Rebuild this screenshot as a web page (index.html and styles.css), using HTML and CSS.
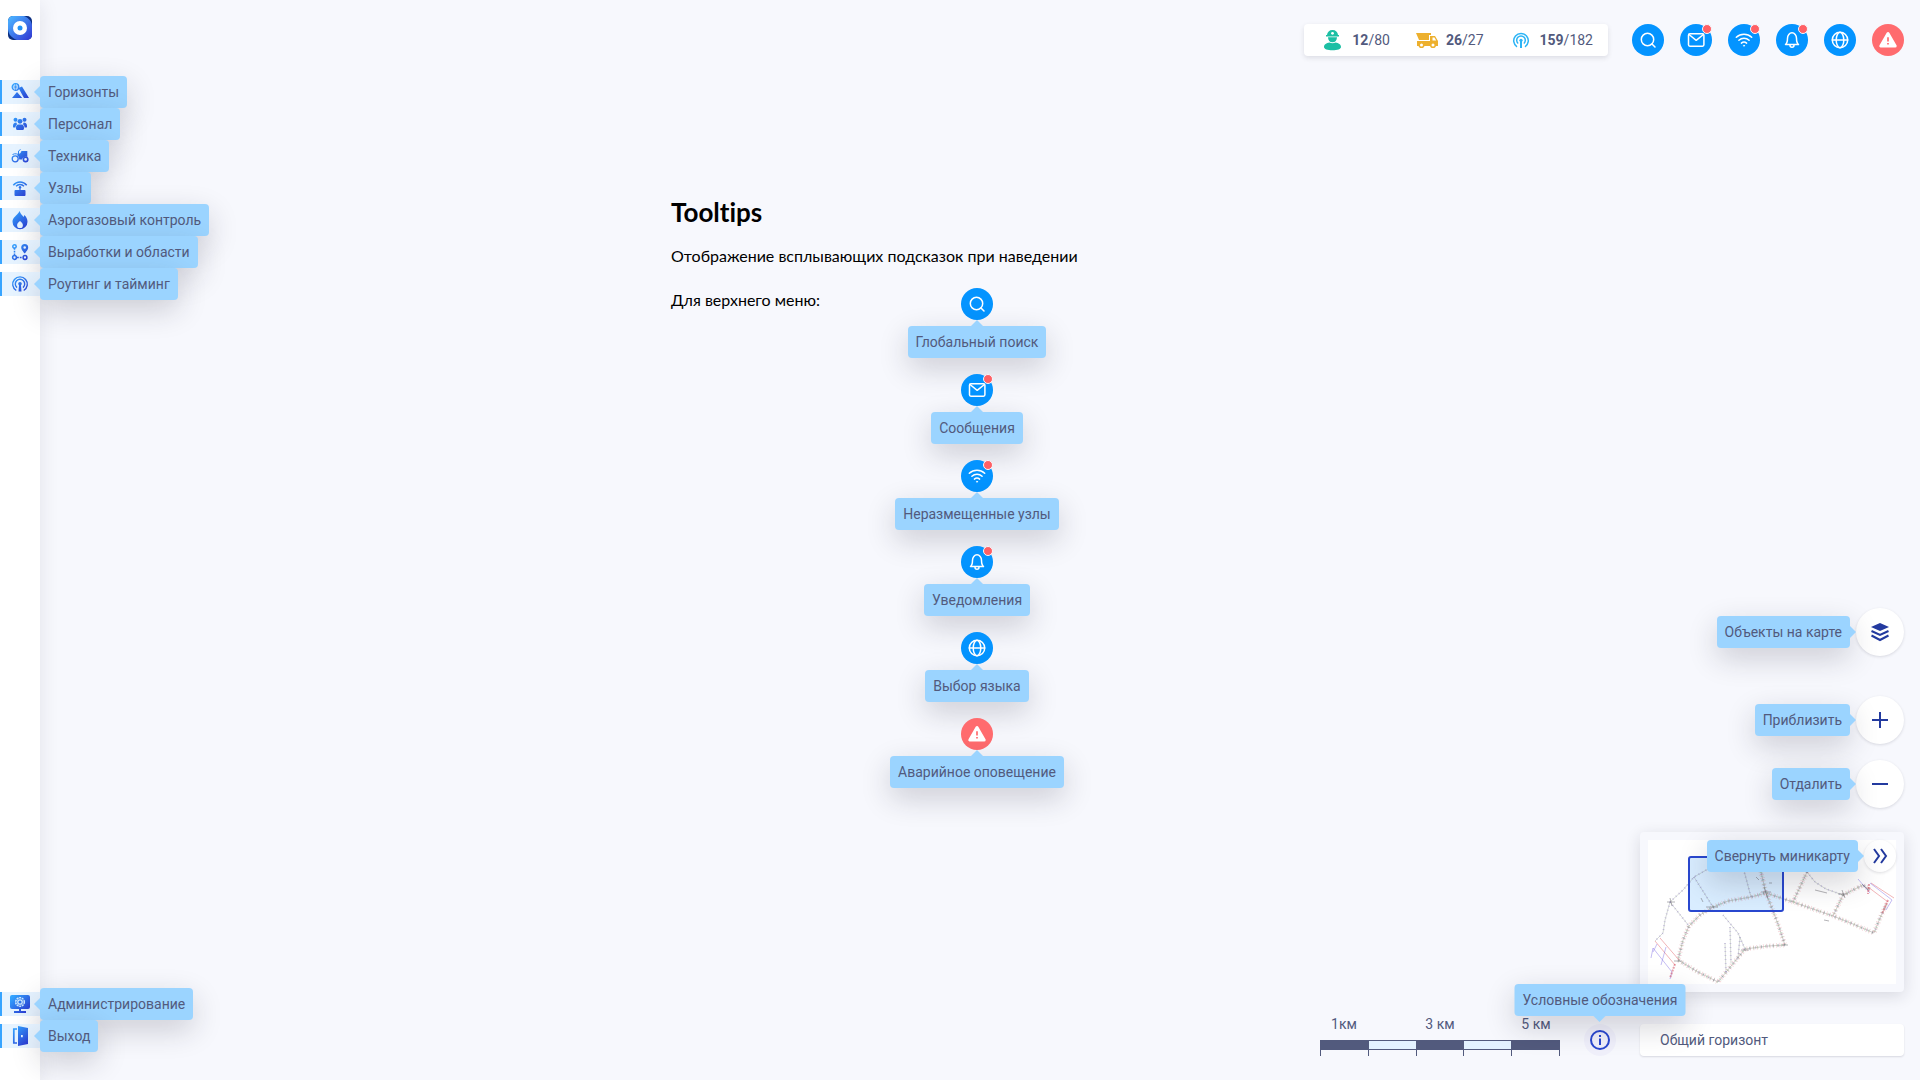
FILE: index.html
```html
<!DOCTYPE html>
<html lang="ru">
<head>
<meta charset="utf-8">
<meta name="viewport" content="width=device-width, initial-scale=1">
<title>Tooltips</title>
<link rel="stylesheet" href="styles.css">
</head>
<body>
<svg class="sprite" width="0" height="0" aria-hidden="true">
  <defs>
    <linearGradient id="blue" gradientUnits="userSpaceOnUse" x1="3" y1="2" x2="17" y2="18">
      <stop offset="0" stop-color="#32a4ff"/><stop offset="1" stop-color="#2c3dd3"/>
    </linearGradient>
    <linearGradient id="logo" gradientUnits="userSpaceOnUse" x1="2" y1="2" x2="22" y2="22">
      <stop offset="0" stop-color="#4ab0ff"/><stop offset="1" stop-color="#3340d6"/>
    </linearGradient>
    <symbol id="search" viewBox="0 0 32 32"><circle cx="15.5" cy="15.5" r="6.2"/><path d="M20 20l3 3"/></symbol>
    <symbol id="mail" viewBox="0 0 32 32"><rect x="8.5" y="9.8" width="15.4" height="12.4" rx="1.4"/><path d="M9 10.500l7.200 5.800 7.200-5.800"/></symbol>
    <symbol id="wifi" viewBox="0 0 32 32"><path d="M8.300 13.300a11.500 11.500 0 0 1 15.400 0M10.900 16.300a7.600 7.600 0 0 1 10.200 0M13.400 19.100a4 4 0 0 1 5.200 0"/><circle cx="16" cy="21.700" r=".6" fill="#fff" stroke-width=".6"/></symbol>
    <symbol id="bell" viewBox="0 0 32 32"><path d="M9.500 20.500c1.700-1.300 2-2.700 2-6.200a4.500 5.500 0 0 1 9 0c0 3.500.3 4.900 2 6.200zM14 21.200a2 2 0 0 0 4 0"/></symbol>
    <symbol id="globe" viewBox="0 0 32 32"><circle cx="16" cy="16" r="7.700"/><ellipse cx="16" cy="16" rx="3.800" ry="7.700"/><path d="M8.300 16h15.400"/></symbol>
    <symbol id="alert" viewBox="0 0 32 32"><path d="M16 9.500L8.800 22h14.400z" fill="#fff" stroke-width="3"/><path d="M16 13.200v4.300M16 19v1.600" stroke="#ff6b6e" stroke-width="1.700" stroke-linecap="butt"/></symbol>
  </defs>
</svg>

<aside class="sidebar">
  <a class="logo" href="#" aria-label="Главная">
    <svg width="24" height="24" viewBox="0 0 24 24"><rect width="24" height="24" rx="5" fill="#0c2f80"/><path d="M5 0h11c5 2 8 6 8 10v9a5 5 0 0 1-5 5H9C4 22 0 18 0 13V5a5 5 0 0 1 5-5z" fill="url(#logo)"/><circle cx="12" cy="12" r="7" fill="#fff"/><circle cx="12" cy="12" r="2.500" fill="#2291f5"/></svg>
  </a>
  <nav class="menu">
    <a class="menu-item" href="#"><svg viewBox="0 0 20 20"><circle cx="5.500" cy="5" r="3.300" fill="none" stroke="url(#blue)" stroke-width="1.300"/><path d="M2.500 5h6M5.500 2v6M3.500 3l4 4M7.500 3l-4 4" stroke="url(#blue)" stroke-width=".7"/><path d="M8.500 6l3.500-1.500 7 11.500h-5zM2 16l5-6 5.200 6z" fill="url(#blue)"/></svg><span class="tip tip-right">Горизонты</span></a>
    <a class="menu-item" href="#"><svg viewBox="0 0 20 20" fill="url(#blue)"><circle cx="5.500" cy="5.800" r="2"/><circle cx="14.500" cy="5.800" r="2"/><circle cx="10" cy="7.300" r="2.400"/><path d="M6.300 8.500a4 4 0 0 0 1 1.800c-1.300.6-1.800 1.700-1.800 3.200H4c-1 0-1-.5-1-1.500 0-2 1-3.500 3.300-3.500zM13.700 8.500c2.300 0 3.300 1.500 3.300 3.500 0 1 0 1.500-1 1.500h-1.500c0-1.500-.5-2.600-1.800-3.200a4 4 0 0 0 1-1.800zM8.500 10.600h3c1.800 0 2.500 1.400 2.500 3.400 0 1.600-.4 2-1.800 2H7.800C6.400 16 6 15.600 6 14c0-2 .7-3.400 2.500-3.400z"/></svg><span class="tip tip-right">Персонал</span></a>
    <a class="menu-item" href="#"><svg viewBox="0 0 20 20"><circle cx="5.200" cy="12.800" r="3" fill="none" stroke="url(#blue)" stroke-width="1.300"/><circle cx="15.600" cy="13.400" r="2.200" fill="none" stroke="url(#blue)" stroke-width="1.600"/><path d="M10.500 7l1-2h5.800v6a4 4 0 0 0-5.300 2.500H9.200A4.500 4.500 0 0 0 7 9z" fill="url(#blue)"/><path d="M2.500 8.500c3-1.500 5-.5 7 .5M8.500 8V5l2-1.500" fill="none" stroke="url(#blue)"/></svg><span class="tip tip-right">Техника</span></a>
    <a class="menu-item" href="#"><svg viewBox="0 0 20 20"><path d="M3.300 7.200a8.500 8.500 0 0 1 13.400 0M6 8.300a5.500 5.500 0 0 1 8 0" fill="none" stroke="url(#blue)" stroke-width="1.400"/><circle cx="10" cy="9.200" r="1.200" fill="url(#blue)"/><path d="M9.400 9h1.200v3h4.100c.6 0 .8.300.8.900v4.200c0 .6-.3.900-.8.900H5.300c-.5 0-.8-.3-.8-.9v-4.200c0-.6.300-.9.800-.9h4.100z" fill="url(#blue)"/></svg><span class="tip tip-right">Узлы</span></a>
    <a class="menu-item" href="#"><svg viewBox="0 0 20 20"><path fill-rule="evenodd" d="M9.800 1c.2 2.800 2.400 3.800 3.700 6 .5-.6.700-1.200.7-2 2 1.700 3.300 3.900 3.300 6.800a7.500 7.500 0 0 1-15 0C2.500 7.500 6.500 6 9.800 1zM10 11c-1.700 1.500-2.900 2.600-2.900 4.200a2.900 2.900 0 0 0 5.800 0c0-1.600-1.200-2.700-2.900-4.200z" fill="url(#blue)"/></svg><span class="tip tip-right">Аэрогазовый контроль</span></a>
    <a class="menu-item" href="#"><svg viewBox="0 0 20 20"><path fill-rule="evenodd" d="M14.700 2a3.500 3.500 0 0 1 3.500 3.500c0 2.300-3.500 6-3.500 6s-3.500-3.700-3.500-6A3.500 3.500 0 0 1 14.700 2zm0 2.200a1.300 1.300 0 1 0 0 2.600 1.300 1.300 0 0 0 0-2.600z" fill="url(#blue)"/><g fill="none" stroke="url(#blue)" stroke-width="1.500"><circle cx="4.500" cy="4.400" r="1.700"/><circle cx="4.500" cy="15.500" r="1.900"/><circle cx="15" cy="15.500" r="1.900"/><path d="M4.500 6v7.500M7 15.500h5.500" stroke-dasharray="1.800 1"/></g></svg><span class="tip tip-right">Выработки и области</span></a>
    <a class="menu-item" href="#"><svg viewBox="0 0 20 20"><g fill="none" stroke="url(#blue)" stroke-width="1.400"><path d="M6.300 16.500a7.300 7.300 0 1 1 7.400 0"/><path d="M7 13.600a4.700 4.700 0 1 1 6 0"/></g><circle cx="10" cy="9.800" r="1.800" fill="url(#blue)"/><path d="M9 11h2l.5 6.500h-3z" fill="url(#blue)"/></svg><span class="tip tip-right">Роутинг и тайминг</span></a>
  </nav>
  <nav class="menu menu-bottom">
    <a class="menu-item" href="#"><svg viewBox="0 0 20 20"><path d="M2 1h16a2 2 0 0 1 2 2v10a2 2 0 0 1-2 2h-7v2h5v2H4v-2h5v-2H2a2 2 0 0 1-2-2V3a2 2 0 0 1 2-2z" fill="url(#blue)"/><circle cx="10" cy="8" r="4.300" fill="none" stroke="#cfe9ff" stroke-width="1.500" stroke-dasharray="2 .7"/><circle cx="10" cy="8" r="2.200" fill="none" stroke="#cfe9ff" stroke-width="1.300"/></svg><span class="tip tip-right">Администрирование</span></a>
    <a class="menu-item" href="#"><svg viewBox="0 0 20 20"><path fill-rule="evenodd" d="M8 0l10 2v16L8 20zM11 9v2.200h1.800V9z" fill="url(#blue)"/><path d="M7 3H3.800v14H7" fill="none" stroke="url(#blue)" stroke-width="1.700"/></svg><span class="tip tip-right">Выход</span></a>
  </nav>
</aside>

<main class="main">
  <header class="topbar">
    <div class="stats">
      <div class="stat"><svg viewBox="0 0 24 24" fill="#1cbfa4"><path d="M7 7c.3-3 2.300-5 5.500-5S17.800 4 18 7h1v1.500H6V7zM8 9.300h9c0 3-1.800 5-4.500 5S8 12.300 8 9.300zM9.500 14.500c1.700 1 4.300 1 6 0 3 .3 5.500 2 5.500 4.500 0 2-3.500 3.300-8.500 3.300S4 21 4 19c0-2.500 2.500-4.200 5.500-4.500z"/><circle cx="12.500" cy="5.300" r="1.400" fill="#fff"/></svg><span><b>12</b>/80</span></div>
      <div class="stat"><svg viewBox="0 0 24 24"><path d="M2 5h15v2h-2v5H5zM16 8h5l3 5v5H3v-5h13z" fill="#edb02e"/><path d="M18.500 9.500h2l1.700 3h-3.700z" fill="#fff"/><g fill="#fff" stroke="#edb02e" stroke-width="1.600"><circle cx="7.500" cy="17" r="2.300"/><circle cx="19" cy="17" r="2.300"/></g></svg><span><b>26</b>/27</span></div>
      <div class="stat"><svg viewBox="0 0 24 24"><g fill="none" stroke="#2cb4f5" stroke-width="1.500"><path d="M9 18.800a7.300 7.300 0 1 1 8 0"/><path d="M10.200 15.500a4.300 4.300 0 1 1 5.600 0"/></g><circle cx="13" cy="12.300" r="1.600" fill="#2cb4f5"/><path d="M12 13h2v7h-2z" fill="#2cb4f5"/></svg><span><b>159</b>/182</span></div>
    </div>
    <button class="round" aria-label="Глобальный поиск"><svg><use href="#search"/></svg></button>
    <button class="round has-dot" aria-label="Сообщения"><svg><use href="#mail"/></svg></button>
    <button class="round has-dot" aria-label="Неразмещенные узлы"><svg><use href="#wifi"/></svg></button>
    <button class="round has-dot" aria-label="Уведомления"><svg><use href="#bell"/></svg></button>
    <button class="round" aria-label="Выбор языка"><svg><use href="#globe"/></svg></button>
    <button class="round danger" aria-label="Аварийное оповещение"><svg><use href="#alert"/></svg></button>
  </header>

  <section class="intro">
    <h1>Tooltips</h1>
    <p>Отображение всплывающих подсказок при наведении</p>
    <div class="demo">
      <p>Для верхнего меню:</p>
      <ul class="demo-list">
        <li><button class="round" aria-labelledby="t1"><svg><use href="#search"/></svg></button><span class="tip tip-below" id="t1">Глобальный поиск</span></li>
        <li><button class="round has-dot" aria-labelledby="t2"><svg><use href="#mail"/></svg></button><span class="tip tip-below" id="t2">Сообщения</span></li>
        <li><button class="round has-dot" aria-labelledby="t3"><svg><use href="#wifi"/></svg></button><span class="tip tip-below" id="t3">Неразмещенные узлы</span></li>
        <li><button class="round has-dot" aria-labelledby="t4"><svg><use href="#bell"/></svg></button><span class="tip tip-below" id="t4">Уведомления</span></li>
        <li><button class="round" aria-labelledby="t5"><svg><use href="#globe"/></svg></button><span class="tip tip-below" id="t5">Выбор языка</span></li>
        <li><button class="round danger" aria-labelledby="t6"><svg><use href="#alert"/></svg></button><span class="tip tip-below" id="t6">Аварийное оповещение</span></li>
      </ul>
    </div>
  </section>

  <section class="map-tools">
    <div class="tool tool-layers"><span class="tip tip-left" id="m1">Объекты на карте</span><button class="map-button" aria-labelledby="m1"><svg viewBox="0 0 24 24"><path d="M12 3l9 4-9 4-9-4z" fill="#233a9f" stroke="none"/><path d="M3.500 11l8.500 4 8.500-4M3.500 15.500l8.500 4.500 8.500-4.500"/></svg></button></div>
    <div class="tool"><span class="tip tip-left" id="m2">Приблизить</span><button class="map-button" aria-labelledby="m2"><svg viewBox="0 0 24 24"><path d="M12 4v16M4 12h16"/></svg></button></div>
    <div class="tool"><span class="tip tip-left" id="m3">Отдалить</span><button class="map-button" aria-labelledby="m3"><svg viewBox="0 0 24 24"><path d="M4 12h16"/></svg></button></div>

    <div class="minimap">
      <svg class="minimap-plan" viewBox="0 0 248 144" aria-hidden="true">
        <defs>
          <g id="roads">
            <path d="M65 67L80 61 103 57 118 53 145 62 165 69 185 76 205 84 226 93 232 78 239 63"/>
            <path d="M112 28L118 53 130 84 137 105 120 106 97 109 88 120 70 142 50 132 30 120 35 100 41 86 52 75 65 67"/>
            <path d="M159 32L145 62M195 55L185 76M195 55L215 45 222 50"/>
          </g>
          <g id="paths">
            <path d="M22 62L35 50 46 37 60 29 95 27 103 57M46 37L65 67M159 32L167 42 178 49 195 55"/>
            <path d="M75 75L90 93 97 109M82 87L83 123M77 103L78 132M92 97L90 118M22 62L41 86M22 62L17 80 15 93 7 101"/>
          </g>
        </defs>
        <rect class="viewport-fill" x="41" y="17" width="94" height="54" rx="2"/>
        <g fill="none">
          <use href="#roads" stroke="#8d8a86" stroke-opacity=".4" stroke-width="1"/>
          <use href="#roads" stroke="#e58e98" stroke-opacity=".4" stroke-width="5" stroke-dasharray=".7 2.600"/>
          <use href="#roads" stroke="#76a878" stroke-opacity=".35" stroke-width="3" stroke-dasharray="1 3"/>
          <use href="#roads" stroke="#6a5f93" stroke-opacity=".35" stroke-width="3" stroke-dasharray=".8 5"/>
          <use href="#paths" stroke="#8c9a8c" stroke-opacity=".5" stroke-width=".7"/>
          <use href="#paths" stroke="#7c65c0" stroke-opacity=".35" stroke-width="2" stroke-dasharray=".8 3.200"/>
          <path d="M7 101L27 125M12 98L31 120M220 47L240 62M223 43L246 58" stroke="#e46a70" stroke-opacity=".5"/>
          <path d="M5 108L24 132 22 139M5 108L3 118M18 107L13 125M210 39L222 53M222 43L244 60 238 70M9 104L5 112" stroke="#6f5be0" stroke-opacity=".4"/>
          <path d="M27 124L22 138M240 60L234 74M221 44L220 54" stroke="#d4465a" stroke-opacity=".5" stroke-width="2" stroke-dasharray="2 1"/>
          <path d="M58 67h12M113 52h10M116 47l4 12M190 54h10M194 50l3 8M19 62h8M22 58l2 8M26 121h8M134 105h6M93 110h8M214 44l6 6M167 50l12 3M176 80l5 1M108 37l3 3M53 58l2 4M121 43h3" stroke="#69686e" stroke-opacity=".5" stroke-width="1"/>
        </g>
        <rect x="41" y="17" width="94" height="54" rx="2" fill="none" stroke="#2947cf" stroke-width="2"/>
      </svg>
      <div class="collapse"><span class="tip tip-left" id="m4">Свернуть миникарту</span><button class="map-button map-button-small" aria-labelledby="m4"><svg viewBox="0 0 24 24"><path d="M6 5l5 7-5 7M13 5l5 7-5 7"/></svg></button></div>
    </div>

    <div class="footer">
      <div class="scale">
        <div class="scale-labels"><span>1км</span><span></span><span>3 км</span><span></span><span>5 км</span></div>
        <div class="scale-bar"><i></i><i></i><i></i><i></i><i></i></div>
      </div>
      <button class="info" aria-labelledby="m5"><svg viewBox="0 0 20 20"><circle cx="10" cy="10" r="9"/><path d="M10 8.500V15M10 5v2"/></svg><span class="tip tip-above" id="m5">Условные обозначения</span></button>
      <select class="horizon" aria-label="Горизонт"><option>Общий горизонт</option></select>
    </div>
  </section>
</main>
</body>
</html>
```
FILE: styles.css
```css
* {
  box-sizing: border-box;
}

body {
  margin: 0;
  display: flex;
  min-height: 100vh;
  background: #f7f8fd;
  color: #525a7d;
  font: 14px/20px Roboto, sans-serif;
}

button,
select {
  border: 0;
  padding: 0;
  font: inherit;
  color: inherit;
  cursor: pointer;
}

.sprite {
  position: absolute;
}

/* Tooltips */
.tip {
  --tip: #9bd4ff;
  position: relative;
  height: 32px;
  padding: 6px 8px;
  border-radius: 4px;
  background: var(--tip);
  box-shadow: 0 10px 30px rgba(30, 30, 50, .2);
  white-space: nowrap;
}

.tip::before {
  content: "";
  position: absolute;
  border: 6px solid transparent;
}

.tip-right::before {
  right: 100%;
  top: 10px;
  border-left: 0;
  border-right-color: var(--tip);
}

.tip-left::before {
  left: 100%;
  top: 10px;
  border-right: 0;
  border-left-color: var(--tip);
}

.tip-below::before {
  bottom: 100%;
  left: calc(50% - 6px);
  border-top: 0;
  border-bottom-color: var(--tip);
}

.tip-above::before {
  top: 100%;
  left: calc(50% - 6px);
  border-bottom: 0;
  border-top-color: var(--tip);
}

/* Sidebar */
.sidebar {
  position: relative;
  z-index: 1;
  display: flex;
  flex-direction: column;
  flex: none;
  width: 40px;
  padding: 16px 0 32px;
  background: #fff;
  box-shadow: 0 4px 20px rgba(30, 30, 50, .1);
}

.logo {
  height: 24px;
  margin: 0 8px 40px;
}

.logo svg {
  display: block;
}

.menu {
  display: flex;
  flex-direction: column;
  gap: 8px;
}

.menu-bottom {
  margin-top: auto;
}

.menu-item {
  position: relative;
  display: flex;
  align-items: center;
  height: 24px;
  padding-left: 8px;
  border-left: 2px solid #37a4ff;
  background: #e6f3ff;
  color: inherit;
  text-decoration: none;
}

.menu-item svg {
  width: 20px;
  height: 20px;
}

.menu-item .tip {
  position: absolute;
  left: 38px;
  top: -4px;
}

/* Main area */
.main {
  flex: 1;
  display: grid;
  grid-template-columns: 1fr 612px 1fr;
  grid-template-rows: auto 1fr;
  padding: 24px 16px 24px 10px;
}

.topbar {
  grid-column: 1 / -1;
  display: flex;
  justify-content: flex-end;
  gap: 16px;
}

.stats {
  display: flex;
  align-items: center;
  gap: 24px;
  height: 32px;
  margin-right: 8px;
  padding: 0 15px 0 16px;
  border-radius: 4px;
  background: #fff;
  box-shadow: 0 2px 5px rgba(30, 30, 50, .12);
}

.stat {
  display: flex;
  align-items: center;
  gap: 8px;
}

.stat svg {
  width: 24px;
  height: 24px;
}

.round {
  position: relative;
  width: 32px;
  height: 32px;
  border-radius: 50%;
  background: #0494ff;
}

.round.danger {
  background: #ff6b6e;
}

.round svg {
  display: block;
  width: 32px;
  height: 32px;
  fill: none;
  stroke: #fff;
  stroke-width: 1.5;
  stroke-linecap: round;
  stroke-linejoin: round;
}

.has-dot::after {
  content: "";
  position: absolute;
  top: 0;
  right: 0;
  width: 8px;
  height: 8px;
  border: 1px solid #f7f8fd;
  border-radius: 50%;
  background: #ff6065;
}

/* Description with the examples */
.intro {
  grid-column: 2;
  padding-top: 140px;
  color: #000;
  font: 16px/24px Lato, sans-serif;
  font-variant-ligatures: none;
}

.intro h1 {
  margin: 0 0 16px;
  font-size: 26px;
  line-height: 32px;
}

.intro p {
  margin: 0;
}

.demo {
  display: grid;
  grid-template-columns: 1fr auto 1fr;
  margin-top: 20px;
}

.demo-list {
  display: flex;
  flex-direction: column;
  gap: 16px;
  margin: 0;
  padding: 0;
  list-style: none;
  color: #525a7d;
  font: 14px/20px Roboto, sans-serif;
}

.demo-list li {
  display: flex;
  flex-direction: column;
  align-items: center;
  gap: 6px;
}

/* Map controls */
.map-tools {
  grid-column: 3;
  align-self: end;
  display: flex;
  flex-direction: column;
  align-items: flex-end;
}

.tool {
  display: flex;
  align-items: center;
  gap: 6px;
  margin-bottom: 16px;
}

.tool-layers {
  margin-bottom: 40px;
}

.map-button {
  display: grid;
  place-items: center;
  width: 48px;
  height: 48px;
  border-radius: 50%;
  background: #fff;
  box-shadow: 0 1px 3px rgba(30, 30, 50, .14);
}

.map-button svg {
  width: 24px;
  height: 24px;
  fill: none;
  stroke: #233a9f;
  stroke-width: 2;
}

.map-button-small {
  width: 32px;
  height: 32px;
}

.minimap {
  position: relative;
  width: 264px;
  margin: 8px 0 22px;
  padding: 8px;
  border-radius: 4px;
  background: #f7f8fd;
  box-shadow: 0 4px 16px rgba(30, 30, 50, .14);
}

.minimap-plan {
  display: block;
  width: 100%;
  background: #fff;
}

.viewport-fill {
  fill: #d9edff;
}

.collapse {
  position: absolute;
  top: 8px;
  right: 8px;
  display: flex;
  gap: 6px;
}

.footer {
  display: flex;
  align-items: flex-end;
  gap: 24px;
}

.scale {
  width: 240px;
}

.scale-labels {
  display: grid;
  grid-template-columns: repeat(5, 1fr);
  margin-bottom: 6px;
  text-align: center;
}

.scale-bar {
  display: grid;
  grid-template-columns: repeat(5, 1fr);
  height: 16px;
  border-right: 1px solid #525a7d;
}

.scale-bar i {
  border-left: 1px solid #525a7d;
}

.scale-bar i::before {
  content: "";
  display: block;
  height: 8px;
  border: solid #525a7d;
  border-width: 1px 0;
  background: #525a7d;
}

.scale-bar i:nth-child(even)::before {
  background: #e3f2ff;
}

.info {
  position: relative;
  display: grid;
  place-items: center;
  width: 32px;
  height: 32px;
  border-radius: 50%;
  background: #f0f0fb;
}

.info svg {
  width: 20px;
  height: 20px;
  fill: none;
  stroke: #2947cf;
  stroke-width: 2;
}

.info .tip {
  position: absolute;
  bottom: 40px;
  left: 50%;
  transform: translateX(-50%);
}

.horizon {
  appearance: none;
  width: 264px;
  height: 32px;
  padding: 0 20px;
  border-radius: 4px;
  background: #fff;
  box-shadow: 0 1px 2px rgba(30, 30, 50, .14);
}
```
